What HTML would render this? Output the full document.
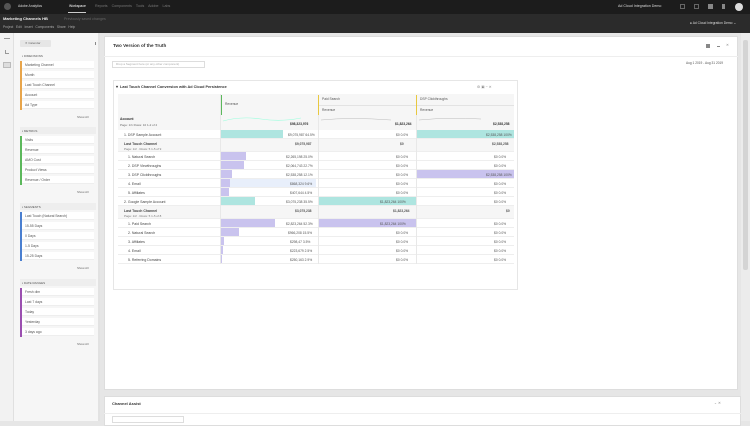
<!DOCTYPE html>
<html><head><meta charset="utf-8"><style>
*{margin:0;padding:0;box-sizing:border-box}
body{width:750px;height:421px;overflow:hidden;background:#e6e6e6;font-family:"Liberation Sans",sans-serif;position:relative;color:#333}
.a{position:absolute}
.t{font-size:3.6px;white-space:nowrap;line-height:1}
.w{color:#ddd}
.li{position:absolute;left:66px;width:28px;height:8px;background:#fff;border-bottom:1px solid #eee}
.li span{position:absolute;left:3px;top:2px;font-size:3.4px;color:#555}
.r{position:absolute;left:118px;width:396px;border-bottom:1px solid #eee;background:#fff}
.r .l{position:absolute;left:6px;top:3px;font-size:3.5px;color:#444}
.r .v{position:absolute;font-size:3.3px;color:#555;top:3px}
.bar{position:absolute;top:0;height:100%}
</style></head><body>
<!-- top bars -->
<div class="a" style="left:0;top:0;width:750px;height:14px;background:#1c1c1c"></div>
<div class="a" style="left:4px;top:3px;width:7px;height:7px;border-radius:50%;background:#555"></div>
<div class="a t w" style="left:18px;top:5px;font-size:3.4px">Adobe Analytics</div>
<div class="a t w" style="left:69px;top:5px;font-size:3.4px;color:#fff">Workspace</div>
<div class="a" style="left:68px;top:12px;width:18px;height:1px;background:#ccc"></div>
<div class="a t" style="left:95px;top:5px;color:#777">Reports &nbsp;&nbsp; Components &nbsp;&nbsp; Tools &nbsp;&nbsp; Adobe &nbsp;&nbsp; Labs</div>
<div class="a t w" style="left:618px;top:5px">Ad Cloud Integration Demo</div>
<div class="a" style="left:680px;top:4px;width:5px;height:5px;border:1px solid #666"></div>
<div class="a" style="left:694px;top:4px;width:5px;height:5px;border:1px solid #666"></div>
<div class="a" style="left:708px;top:4px;width:5px;height:5px;background:#888"></div>
<div class="a" style="left:722px;top:4px;width:3px;height:5px;background:#888"></div>
<div class="a" style="left:735px;top:3px;width:8px;height:8px;border-radius:50%;background:#ddd"></div>
<div class="a" style="left:0;top:14px;width:750px;height:19px;background:#2b2b2b"></div>
<div class="a t" style="left:3px;top:17px;color:#eee;font-size:4px;font-weight:bold">Marketing Channels HB</div>
<div class="a t" style="left:64px;top:18px;color:#666">Previously saved changes</div>
<div class="a t" style="left:3px;top:26px;color:#aaa;font-size:3.3px">Project &nbsp; Edit &nbsp; Insert &nbsp; Components &nbsp; Share &nbsp; Help</div>
<div class="a t" style="left:690px;top:22px;color:#ddd;font-size:3.3px">● Ad Cloud Integration Demo ⌄</div>
<!-- left rail -->
<div class="a" style="left:0;top:33px;width:14px;height:388px;background:#f2f2f2;border-right:1px solid #e0e0e0"></div>
<div class="a" style="left:4px;top:38px;width:6px;height:1px;background:#999"></div>
<div class="a" style="left:5px;top:50px;width:4px;height:4px;border-left:1px solid #999;border-bottom:1px solid #999"></div>
<div class="a" style="left:3px;top:62px;width:8px;height:6px;background:#ddd;border:1px solid #bbb"></div>
<!-- left panel -->
<div class="a" style="left:14px;top:33px;width:86px;height:388px;background:#f6f6f6;border-right:2px solid #e2e2e2"></div>
<div class="a" style="left:20px;top:40px;width:31px;height:7px;background:#e6e6e6;border-radius:1px"></div>
<div class="a t" style="left:25px;top:42px;font-size:3px;color:#666">✕ Calendar</div>
<div class="a" style="left:95px;top:42px;width:1px;height:3px;background:#888"></div>
<!-- groups -->
<div class="a t" style="left:22px;top:55px;font-size:3px;color:#555">▪ DIMENSIONS</div>
<div class="a" style="left:20px;top:61px;width:1.5px;height:49px;background:#e8a54b"></div>
<div class="li" style="left:22px;top:61px;width:72px"><span>Marketing Channel</span></div>
<div class="li" style="left:22px;top:71px;width:72px"><span>Month</span></div>
<div class="li" style="left:22px;top:81px;width:72px"><span>Last Touch Channel</span></div>
<div class="li" style="left:22px;top:91px;width:72px"><span>Account</span></div>
<div class="li" style="left:22px;top:101px;width:72px"><span>Ad Type</span></div>
<div class="a t" style="left:77px;top:116px;font-size:3px;color:#666">Show All</div>
<div class="a" style="left:20px;top:127px;width:76px;height:7px;background:#eee"></div>
<div class="a t" style="left:22px;top:130px;font-size:3px;color:#555">▪ METRICS</div>
<div class="a" style="left:20px;top:136px;width:1.5px;height:49px;background:#5cb85c"></div>
<div class="li" style="left:22px;top:136px;width:72px"><span>Visits</span></div>
<div class="li" style="left:22px;top:146px;width:72px"><span>Revenue</span></div>
<div class="li" style="left:22px;top:156px;width:72px"><span>AMO Cost</span></div>
<div class="li" style="left:22px;top:166px;width:72px"><span>Product Views</span></div>
<div class="li" style="left:22px;top:176px;width:72px"><span>Revenue / Order</span></div>
<div class="a t" style="left:77px;top:191px;font-size:3px;color:#666">Show All</div>
<div class="a" style="left:20px;top:203px;width:76px;height:7px;background:#eee"></div>
<div class="a t" style="left:22px;top:206px;font-size:3px;color:#555">▪ SEGMENTS</div>
<div class="a" style="left:20px;top:212px;width:1.5px;height:49px;background:#4a7fd0"></div>
<div class="li" style="left:22px;top:212px;width:72px"><span>Last Touch (Natural Search)</span></div>
<div class="li" style="left:22px;top:222px;width:72px"><span>15-55 Days</span></div>
<div class="li" style="left:22px;top:232px;width:72px"><span>0 Days</span></div>
<div class="li" style="left:22px;top:242px;width:72px"><span>1-5 Days</span></div>
<div class="li" style="left:22px;top:252px;width:72px"><span>15-25 Days</span></div>
<div class="a t" style="left:77px;top:267px;font-size:3px;color:#666">Show All</div>
<div class="a" style="left:20px;top:279px;width:76px;height:7px;background:#eee"></div>
<div class="a t" style="left:22px;top:282px;font-size:3px;color:#555">▪ DATE RANGES</div>
<div class="a" style="left:20px;top:288px;width:1.5px;height:49px;background:#9b4fb0"></div>
<div class="li" style="left:22px;top:288px;width:72px"><span>Fresh dim</span></div>
<div class="li" style="left:22px;top:298px;width:72px"><span>Last 7 days</span></div>
<div class="li" style="left:22px;top:308px;width:72px"><span>Today</span></div>
<div class="li" style="left:22px;top:318px;width:72px"><span>Yesterday</span></div>
<div class="li" style="left:22px;top:328px;width:72px"><span>3 days ago</span></div>
<div class="a t" style="left:77px;top:343px;font-size:3px;color:#666">Show All</div>
<!-- main panel -->
<div class="a" style="left:104px;top:36px;width:634px;height:354px;background:#fff;border:1px solid #ddd"></div>
<div class="a" style="left:104px;top:56px;width:634px;height:1px;background:#eee"></div>
<div class="a t" style="left:113px;top:44px;font-size:4.6px;color:#333;font-weight:bold">Two Version of the Truth</div>
<div class="a" style="left:706px;top:44px;width:4px;height:4px;background:#888"></div>
<div class="a" style="left:717px;top:46px;width:3px;height:1px;background:#888"></div>
<div class="a t" style="left:726px;top:44px;color:#888">✕</div>
<div class="a t" style="left:686px;top:62px;font-size:3.2px;color:#555">Aug 1 2019 - Aug 31 2019</div>
<div class="a" style="left:112px;top:61px;width:93px;height:7px;border:1px solid #ddd"></div>
<div class="a t" style="left:116px;top:63px;font-size:3px;color:#aaa">Drop a Segment here (or any other component)</div>
<!-- freeform -->
<div class="a" style="left:113px;top:80px;width:405px;height:210px;border:1px solid #e6e6e6;background:#fff"></div>
<div class="a t" style="left:116px;top:86px;font-size:3.8px;font-weight:bold;color:#333">▾ &nbsp;Last Touch Channel Conversion with Ad Cloud Persistence</div>
<div class="a t" style="left:477px;top:86px;color:#888">⚙ ▣ − ✕</div>
<div class="a" style="left:118px;top:94px;width:396px;height:36px;background:#f6f6f6"></div>
<div class="a" style="left:221px;top:95px;width:1px;height:20px;background:#5cb85c"></div>
<div class="a t" style="left:225px;top:103px;font-size:3.3px;color:#555">Revenue</div>
<div class="a" style="left:318px;top:95px;width:1px;height:20px;background:#e8c840"></div>
<div class="a t" style="left:322px;top:98px;font-size:3.3px;color:#555">Paid Search</div>
<div class="a" style="left:319px;top:105px;width:97px;height:1px;background:#e3e3e3"></div>
<div class="a t" style="left:322px;top:109px;font-size:3.3px;color:#555">Revenue</div>
<div class="a" style="left:416px;top:95px;width:1px;height:20px;background:#e8c840"></div>
<div class="a t" style="left:420px;top:98px;font-size:3.3px;color:#555">DSP Clickthroughs</div>
<div class="a" style="left:417px;top:105px;width:97px;height:1px;background:#e3e3e3"></div>
<div class="a t" style="left:420px;top:109px;font-size:3.3px;color:#555">Revenue</div>
<div class="a t" style="left:120px;top:118px;font-size:3.4px;font-weight:bold">Account</div>
<div class="a t" style="left:120px;top:124px;font-size:3px;color:#666">Page: 1/1 Rows: 10 1-2 of 2</div>
<svg class="a" style="left:221px;top:113px" width="293" height="14"><path d="M2 8 Q20 3 40 6 T80 5" stroke="#9fd" fill="none" stroke-width=".6"/><path d="M100 7 Q130 4 170 7" stroke="#bbb" fill="none" stroke-width=".5"/><path d="M198 7 Q230 4 260 6" stroke="#bbb" fill="none" stroke-width=".5"/></svg>
<div class="a t" style="left:290px;top:123px;font-size:3.3px;font-weight:bold">$98,323,976</div>
<div class="a t" style="left:395px;top:123px;font-size:3.3px;font-weight:bold">$1,823,264</div>
<div class="a t" style="left:493px;top:123px;font-size:3.3px;font-weight:bold">$2,538,258</div>
<!-- rows -->
<div class="r" style="top:130px;height:9px"><div class="bar" style="left:103px;width:62px;background:#aee5e0"></div><div class="bar" style="left:298px;width:98px;background:#aee5e0"></div><div class="l">1. DSP Sample Account</div><div class="v" style="left:170px">$9,075,987 64.5%</div><div class="v" style="left:278px">$0 0.0%</div><div class="v" style="left:368px">$2,538,258 100%</div></div>
<div class="r" style="top:139px;height:13px;background:#f6f6f6"><div class="l" style="font-weight:bold">Last Touch Channel</div><div class="l" style="top:8px;font-size:3px;color:#777">Page: 1/2 · Rows: 5 1-5 of 9</div><div class="v" style="left:177px;font-weight:bold">$9,075,987</div><div class="v" style="left:282px;font-weight:bold">$0</div><div class="v" style="left:374px;font-weight:bold">$2,538,258</div></div>
<div class="a" style="left:122px;top:152px;width:1px;height:45px;background:#e8c840"></div>
<div class="r" style="top:152px;height:9px"><div class="bar" style="left:103px;width:25px;background:#c9c3ee"></div><div class="l" style="left:10px">1. Natural Search</div><div class="v" style="left:168px">$2,265,198 25.0%</div><div class="v" style="left:278px">$0 0.0%</div><div class="v" style="left:376px">$0 0.0%</div></div>
<div class="r" style="top:161px;height:9px"><div class="bar" style="left:103px;width:23px;background:#c9c3ee"></div><div class="l" style="left:10px">2. DSP Viewthroughs</div><div class="v" style="left:168px">$2,064,743 22.7%</div><div class="v" style="left:278px">$0 0.0%</div><div class="v" style="left:376px">$0 0.0%</div></div>
<div class="r" style="top:170px;height:9px"><div class="bar" style="left:103px;width:11px;background:#c9c3ee"></div><div class="bar" style="left:298px;width:98px;background:#c9c3ee"></div><div class="l" style="left:10px">3. DSP Clickthroughs</div><div class="v" style="left:168px">$2,538,258 12.1%</div><div class="v" style="left:278px">$0 0.0%</div><div class="v" style="left:368px">$2,538,258 100%</div></div>
<div class="r" style="top:179px;height:9px"><div class="bar" style="left:103px;width:95px;background:#e8effb"></div><div class="bar" style="left:103px;width:9px;background:#c9c3ee"></div><div class="l" style="left:10px">4. Email</div><div class="v" style="left:172px">$868,324 9.6%</div><div class="v" style="left:278px">$0 0.0%</div><div class="v" style="left:376px">$0 0.0%</div></div>
<div class="r" style="top:188px;height:9px"><div class="bar" style="left:103px;width:8px;background:#c9c3ee"></div><div class="l" style="left:10px">5. Affiliates</div><div class="v" style="left:172px">$407,644 4.5%</div><div class="v" style="left:278px">$0 0.0%</div><div class="v" style="left:376px">$0 0.0%</div></div>
<div class="r" style="top:197px;height:9px"><div class="bar" style="left:103px;width:34px;background:#aee5e0"></div><div class="bar" style="left:200px;width:98px;background:#aee5e0"></div><div class="l">2. Google Sample Account</div><div class="v" style="left:168px">$3,075,238 35.5%</div><div class="v" style="left:262px">$1,823,264 100%</div><div class="v" style="left:376px">$0 0.0%</div></div>
<div class="r" style="top:206px;height:13px;background:#f6f6f6"><div class="l" style="font-weight:bold">Last Touch Channel</div><div class="l" style="top:8px;font-size:3px;color:#777">Page: 1/2 · Rows: 5 1-5 of 8</div><div class="v" style="left:177px;font-weight:bold">$3,075,238</div><div class="v" style="left:275px;font-weight:bold">$1,823,264</div><div class="v" style="left:388px;font-weight:bold">$0</div></div>
<div class="a" style="left:122px;top:219px;width:1px;height:45px;background:#e8c840"></div>
<div class="r" style="top:219px;height:9px"><div class="bar" style="left:103px;width:54px;background:#c9c3ee"></div><div class="bar" style="left:200px;width:98px;background:#c9c3ee"></div><div class="l" style="left:10px">1. Paid Search</div><div class="v" style="left:168px">$2,823,264 52.3%</div><div class="v" style="left:262px">$1,823,264 100%</div><div class="v" style="left:376px">$0 0.0%</div></div>
<div class="r" style="top:228px;height:9px"><div class="bar" style="left:103px;width:18px;background:#c9c3ee"></div><div class="l" style="left:10px">2. Natural Search</div><div class="v" style="left:170px">$966,208 15.5%</div><div class="v" style="left:278px">$0 0.0%</div><div class="v" style="left:376px">$0 0.0%</div></div>
<div class="r" style="top:237px;height:9px"><div class="bar" style="left:103px;width:3px;background:#c9c3ee"></div><div class="l" style="left:10px">3. Affiliates</div><div class="v" style="left:172px">$298,47 3.5%</div><div class="v" style="left:278px">$0 0.0%</div><div class="v" style="left:376px">$0 0.0%</div></div>
<div class="r" style="top:246px;height:9px"><div class="bar" style="left:103px;width:2px;background:#c9c3ee"></div><div class="l" style="left:10px">4. Email</div><div class="v" style="left:172px">$223,679 2.5%</div><div class="v" style="left:278px">$0 0.0%</div><div class="v" style="left:376px">$0 0.0%</div></div>
<div class="r" style="top:255px;height:9px"><div class="bar" style="left:103px;width:1px;background:#c9c3ee"></div><div class="l" style="left:10px">5. Referring Domains</div><div class="v" style="left:172px">$250,163 2.9%</div><div class="v" style="left:278px">$0 0.0%</div><div class="v" style="left:376px">$0 0.0%</div></div>
<div class="a" style="left:220px;top:94px;width:1px;height:170px;background:#e8e8e8"></div>
<div class="a" style="left:318px;top:115px;width:1px;height:149px;background:#e8e8e8"></div>
<div class="a" style="left:416px;top:115px;width:1px;height:149px;background:#e8e8e8"></div>
<!-- bottom panel -->
<div class="a" style="left:104px;top:396px;width:637px;height:30px;background:#fff;border:1px solid #ddd"></div>
<div class="a t" style="left:112px;top:402px;font-size:4px;font-weight:bold;color:#333">Channel Assist</div>
<div class="a t" style="left:714px;top:402px;color:#888">⌄ ✕</div>
<div class="a" style="left:104px;top:413px;width:637px;height:1px;background:#eee"></div>
<div class="a" style="left:112px;top:416px;width:72px;height:7px;border:1px solid #ddd"></div>
<!-- right scrollbar -->
<div class="a" style="left:741px;top:33px;width:9px;height:388px;background:#ececec"></div>
<div class="a" style="left:743px;top:40px;width:5px;height:230px;background:#d4d4d4;border-radius:2px"></div>
</body></html>
